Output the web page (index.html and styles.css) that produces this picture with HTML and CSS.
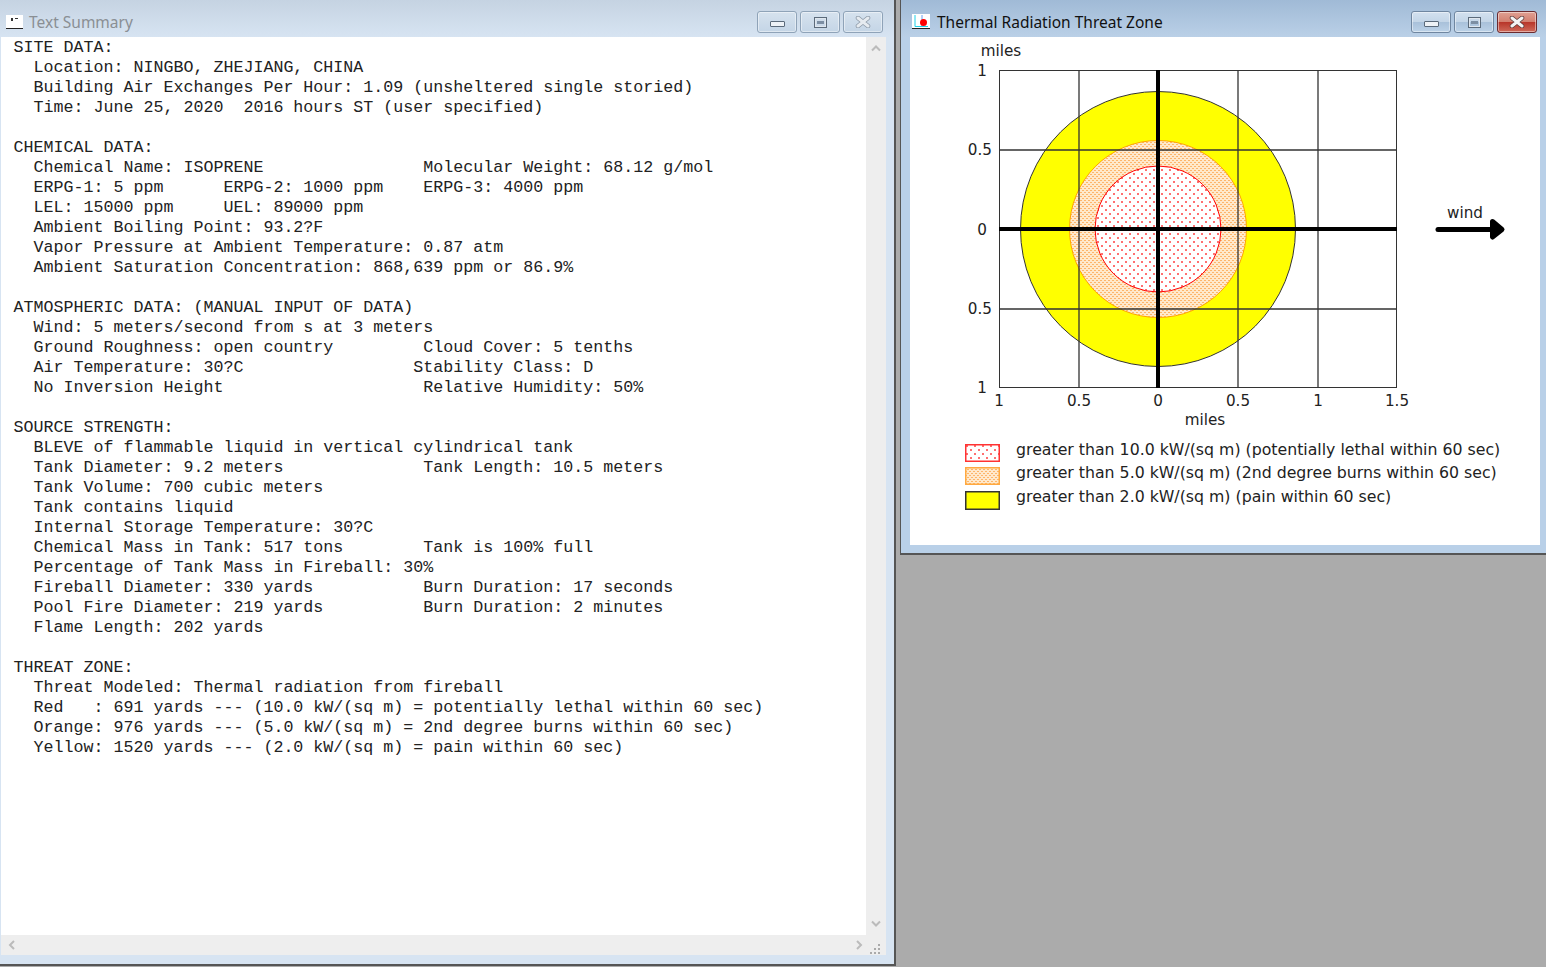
FILE: index.html
```html
<!DOCTYPE html>
<html lang="en">

<head>
    <meta charset="UTF-8">
    <title>Text Summary</title>
    <link rel="stylesheet" href="styles.css">
</head>

<body>
    <div class="window summary inactive">
        <div class="titlebar">
            <svg class="app-icon" width="20" height="16" viewBox="0 0 20 16">
                <rect x="3" y="1" width="17" height="13" fill="#fff" />
                <path d="M3 14.5H21M20.5 1V15" stroke="#222" fill="none" />
                <path d="M8 4h2v3H8zM12 4h3v1h-3z" fill="#333" />
            </svg>
            <span class="title">Text Summary</span>
            <div class="buttons">
                <div class="btn"><span class="min-glyph"></span></div>
                <div class="btn"><span class="max-glyph"></span></div>
                <div class="btn close">
                    <svg class="close-glyph" width="16" height="12" viewBox="0 0 16 12">
                        <path class="x-edge" d="M3 2 13 10M13 2 3 10" />
                        <path class="x-fill" d="M3 2 13 10M13 2 3 10" />
                    </svg>
                </div>
            </div>
        </div>
        <div class="client">
            <div class="text-row">
                <pre class="report">SITE DATA:
  Location: NINGBO, ZHEJIANG, CHINA
  Building Air Exchanges Per Hour: 1.09 (unsheltered single storied)
  Time: June 25, 2020  2016 hours ST (user specified)

CHEMICAL DATA:
  Chemical Name: ISOPRENE                Molecular Weight: 68.12 g/mol
  ERPG-1: 5 ppm      ERPG-2: 1000 ppm    ERPG-3: 4000 ppm
  LEL: 15000 ppm     UEL: 89000 ppm
  Ambient Boiling Point: 93.2?F
  Vapor Pressure at Ambient Temperature: 0.87 atm
  Ambient Saturation Concentration: 868,639 ppm or 86.9%

ATMOSPHERIC DATA: (MANUAL INPUT OF DATA)
  Wind: 5 meters/second from s at 3 meters
  Ground Roughness: open country         Cloud Cover: 5 tenths
  Air Temperature: 30?C                 Stability Class: D
  No Inversion Height                    Relative Humidity: 50%

SOURCE STRENGTH:
  BLEVE of flammable liquid in vertical cylindrical tank
  Tank Diameter: 9.2 meters              Tank Length: 10.5 meters
  Tank Volume: 700 cubic meters
  Tank contains liquid
  Internal Storage Temperature: 30?C
  Chemical Mass in Tank: 517 tons        Tank is 100% full
  Percentage of Tank Mass in Fireball: 30%
  Fireball Diameter: 330 yards           Burn Duration: 17 seconds
  Pool Fire Diameter: 219 yards          Burn Duration: 2 minutes
  Flame Length: 202 yards

THREAT ZONE:
  Threat Modeled: Thermal radiation from fireball
  Red   : 691 yards --- (10.0 kW/(sq m) = potentially lethal within 60 sec)
  Orange: 976 yards --- (5.0 kW/(sq m) = 2nd degree burns within 60 sec)
  Yellow: 1520 yards --- (2.0 kW/(sq m) = pain within 60 sec)</pre>
                <div class="vscroll">
                    <svg width="12" height="8" viewBox="0 0 12 8"><path d="M2 6.5 6 2.5 10 6.5" class="chev" /></svg>
                    <svg width="12" height="8" viewBox="0 0 12 8"><path d="M2 1.5 6 5.5 10 1.5" class="chev" /></svg>
                </div>
            </div>
            <div class="hscroll">
                <svg width="8" height="12" viewBox="0 0 8 12"><path d="M6 2 2 6 6 10" class="chev" /></svg>
                <svg width="8" height="12" viewBox="0 0 8 12"><path d="M2 2 6 6 2 10" class="chev" /></svg>
                <div class="grip">
                    <svg width="12" height="12" viewBox="0 0 12 12" fill="#aaa">
                        <path d="M8 1h2v2H8zM4 5h2v2H4zM8 5h2v2H8zM0 9h2v2H0zM4 9h2v2H4zM8 9h2v2H8z" />
                    </svg>
                </div>
            </div>
        </div>
    </div>

    <div class="window threat">
        <div class="titlebar">
            <svg class="app-icon" width="20" height="16" viewBox="0 0 20 16">
                <rect x="1" y="0" width="18" height="14" fill="#fff" />
                <path d="M4 1V12.5H17" stroke="#1fd0e8" fill="none" />
                <path d="M11 1V12" stroke="#6aa0f0" fill="none" />
                <circle cx="12.5" cy="8.5" r="3.5" fill="#f00" />
                <path d="M1 14.5H19" stroke="#222" fill="none" />
            </svg>
            <span class="title">Thermal Radiation Threat Zone</span>
            <div class="buttons">
                <div class="btn"><span class="min-glyph"></span></div>
                <div class="btn"><span class="max-glyph"></span></div>
                <div class="btn close">
                    <svg class="close-glyph" width="16" height="12" viewBox="0 0 16 12">
                        <path class="x-edge" d="M3 2 13 10M13 2 3 10" />
                        <path class="x-fill" d="M3 2 13 10M13 2 3 10" />
                    </svg>
                </div>
            </div>
        </div>
        <div class="client">
            
            <svg class="plot" width="630" height="393" viewBox="910 37 630 393">
                <defs>
                    <pattern id="red-dots" width="8" height="8" patternUnits="userSpaceOnUse">
                        <rect width="8" height="8" fill="#fff" />
                        <rect x="1" y="1" width="2" height="2" fill="#ff7070" />
                        <rect x="5" y="5" width="2" height="2" fill="#ff7070" />
                    </pattern>
                    <pattern id="orange-dots" width="4" height="4" patternUnits="userSpaceOnUse">
                        <rect width="4" height="4" fill="#ffe9cc" />
                        <rect width="2" height="1" fill="#fdb56a" />
                        <rect x="2" y="2" width="2" height="1" fill="#fdb56a" />
                    </pattern>
                </defs>

                <circle cx="1158" cy="229" r="137.5" fill="#ff0" stroke="#333" />
                <circle cx="1158" cy="229" r="88.5" fill="url(#orange-dots)" stroke="#ffa500" />
                <circle cx="1158" cy="229" r="63" fill="url(#red-dots)" stroke="#f00" />

                <g stroke="#333" fill="none">
                    <rect x="999.5" y="70.5" width="397" height="317" />
                    <path d="M1079 70V388M1238 70V388M1318 70V388M999 150H1397M999 309H1397" stroke-width="1.3" />
                </g>
                <path d="M999 229H1397M1158 70V388" stroke="#000" stroke-width="4" />

                <g class="axis-label">
                    <text x="1001" y="55.5" text-anchor="middle">miles</text>
                    <text x="987" y="76" text-anchor="end">1</text>
                    <text x="992" y="154.5" text-anchor="end">0.5</text>
                    <text x="987" y="234.5" text-anchor="end">0</text>
                    <text x="992" y="313.5" text-anchor="end">0.5</text>
                    <text x="987" y="393" text-anchor="end">1</text>
                    <text x="999" y="405.5" text-anchor="middle">1</text>
                    <text x="1079" y="405.5" text-anchor="middle">0.5</text>
                    <text x="1158" y="405.5" text-anchor="middle">0</text>
                    <text x="1238" y="405.5" text-anchor="middle">0.5</text>
                    <text x="1318" y="405.5" text-anchor="middle">1</text>
                    <text x="1397" y="405.5" text-anchor="middle">1.5</text>
                    <text x="1205" y="424.5" text-anchor="middle">miles</text>
                    <text x="1465" y="218" text-anchor="middle">wind</text>
                </g>
                <path d="M1438 229.5H1492" stroke="#000" stroke-width="5" stroke-linecap="round" />
                <path d="M1492.5 221.5 1502 229.5 1492.5 237Z" fill="#000" stroke="#000" stroke-width="5" stroke-linejoin="round" />
            </svg>

            <div class="legend">
                <div class="legend-row">
                    <svg class="swatch" width="35" height="18" viewBox="0 0 35 18">
                        <rect x="0.75" y="0.75" width="33.5" height="16.5" fill="url(#red-dots)" stroke="#f33" stroke-width="1.5" />
                    </svg>
                    <span>greater than 10.0 kW/(sq m) (potentially lethal within 60 sec)</span>
                </div>
                <div class="legend-row">
                    <svg class="swatch" width="35" height="18" viewBox="0 0 35 18">
                        <rect x="0.75" y="0.75" width="33.5" height="16.5" fill="url(#orange-dots)" stroke="#ffa940" stroke-width="1.5" />
                    </svg>
                    <span>greater than 5.0 kW/(sq m) (2nd degree burns within 60 sec)</span>
                </div>
                <div class="legend-row">
                    <svg class="swatch" width="35" height="19" viewBox="0 0 35 19">
                        <rect x="0.75" y="0.75" width="33.5" height="17.5" fill="#ff0" stroke="#333" stroke-width="1.5" />
                    </svg>
                    <span>greater than 2.0 kW/(sq m) (pain within 60 sec)</span>
                </div>
            </div>
        </div>
    </div>
</body>

</html>
```

FILE: styles.css
```css
html,
body {
    margin: 0;
    height: 100%;
    overflow: hidden;
}

body {
    position: relative;
    background-color: #ababab;
}

/* windows sit on a free desktop, so they are placed by hand */
.window {
    position: absolute;
    top: 0;
    box-sizing: border-box;
    display: flex;
    flex-direction: column;
    background-color: #b9d0e8;
    border-right: 2px solid #555;
    border-bottom: 2px solid #555;
}

.summary {
    left: 0;
    width: 896px;
    height: 966px;
    padding: 0 8px 9px 1px;
    background-color: #d7e4f2;
}

.threat {
    left: 900px;
    width: 648px;
    height: 555px;
    padding: 0 6px 8px 9px;
    border-left: 1px solid #555;
}

.titlebar {
    box-sizing: border-box;
    display: flex;
    align-items: center;
    flex: none;
    height: 37px;
    margin: 0 -6px 0 -9px;
    padding: 7px 9px 0 10px;
    background: linear-gradient(#a0bad6, #bad0e7);
}

.summary .titlebar {
    margin: 0 -8px 0 -1px;
    padding: 7px 11px 0 3px;
    background: linear-gradient(#c5d3e2, #d7e4f2);
}

.app-icon {
    flex: none;
    margin-right: 6px;
}

.title {
    font-family: "Noto Sans", sans-serif;
    font-size: 15.5px;
    color: #111;
}

.inactive .title {
    color: #8a8f94;
}

.buttons {
    display: flex;
    gap: 3px;
    margin-left: auto;
}

.btn {
    box-sizing: border-box;
    display: flex;
    align-items: center;
    justify-content: center;
    width: 40px;
    height: 22px;
    border: 1px solid #6f86a0;
    border-radius: 3px;
    background: linear-gradient(#d3e1ef 0%, #c3d5e7 50%, #a9c1da 52%, #bcd2e8 100%);
    box-shadow: inset 0 0 0 1px rgba(255, 255, 255, 0.45);
}

.threat .close {
    border-color: #6b2a2e;
    background: linear-gradient(#e0a093 0%, #d27e6e 50%, #b8362a 52%, #cf6a5a 100%);
}

.inactive .btn {
    border-color: #8fa3b8;
    background: linear-gradient(#d6e2ee, #c4d5e6);
}

.min-glyph {
    width: 13px;
    height: 4px;
    margin-top: 4px;
    border: 1px solid #5b6a7a;
    border-radius: 1px;
    background-color: #eef2f6;
}

.max-glyph {
    box-sizing: border-box;
    width: 13px;
    height: 11px;
    border: 2px solid #dfe6ee;
    outline: 1px solid #5b6a7a;
    outline-offset: -1px;
    background-color: #7c8ea3;
    background-clip: content-box;
    padding: 2px 1px;
}

.x-edge,
.x-fill {
    fill: none;
    stroke-linecap: round;
}

.x-edge {
    stroke: #5a3a3a;
    stroke-width: 4.5;
}

.x-fill {
    stroke: #f4f4f4;
    stroke-width: 3;
}

.inactive .x-edge {
    stroke: #8a97a5;
}

.inactive .x-fill {
    stroke: #e6ebf0;
}

.client {
    flex: 1;
    display: flex;
    flex-direction: column;
    background-color: #fff;
    min-height: 0;
}

.text-row {
    flex: 1;
    display: flex;
    min-height: 0;
}

.report {
    flex: 1;
    margin: 0;
    padding: 1px 0 0 12.5px;
    font-family: "Liberation Mono", monospace;
    font-size: 16.67px;
    line-height: 20px;
    color: #222;
}

.vscroll {
    flex: none;
    display: flex;
    flex-direction: column;
    align-items: center;
    justify-content: space-between;
    box-sizing: border-box;
    width: 20px;
    padding: 7px 0;
    background-color: #eee;
}

.hscroll {
    flex: none;
    display: flex;
    align-items: center;
    justify-content: space-between;
    box-sizing: border-box;
    height: 20px;
    padding: 0 0 0 7px;
    background-color: #eee;
}

.chev {
    fill: none;
    stroke: #bbb;
    stroke-width: 2;
}

.hscroll svg:nth-child(2) {
    margin-left: auto;
    margin-right: 3px;
}

.grip {
    display: flex;
    align-items: flex-end;
    justify-content: center;
    width: 20px;
    height: 20px;
}

.plot {
    flex: none;
    display: block;
}

.axis-label text {
    font-family: "DejaVu Sans", sans-serif;
    font-size: 15.2px;
    fill: #222;
}

.legend {
    display: flex;
    flex-direction: column;
    padding: 14px 0 0 55px;
}

.legend-row {
    display: flex;
    gap: 16px;
    height: 23.4px;
    font-family: "DejaVu Sans", sans-serif;
    font-size: 15.75px;
    color: #222;
}

.legend-row span {
    position: relative;
    top: -5px;
    line-height: 22px;
    white-space: nowrap;
}

.swatch {
    flex: none;
}
```
